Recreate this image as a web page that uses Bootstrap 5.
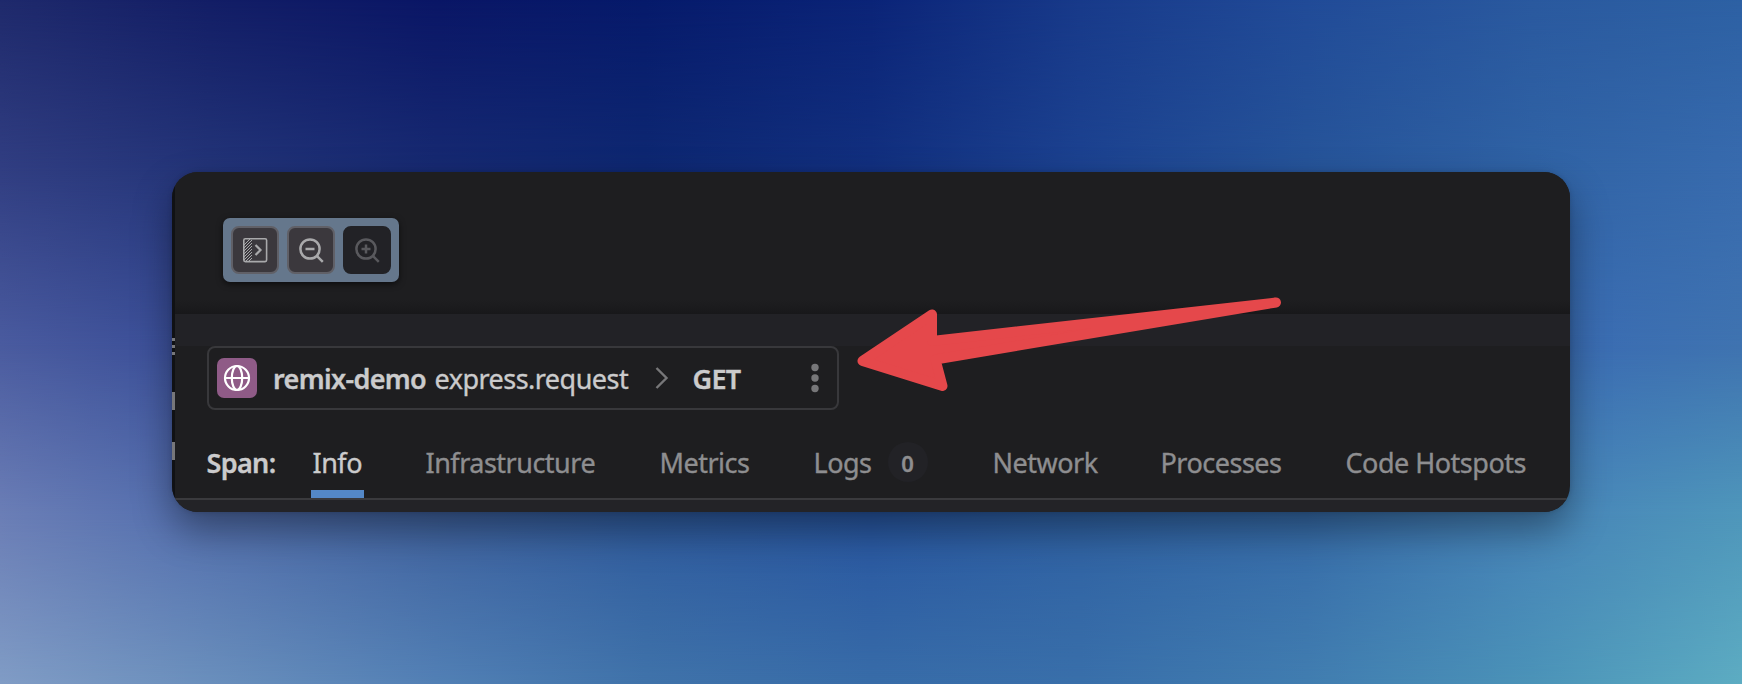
<!DOCTYPE html>
<html lang="en">
<head>
<meta charset="utf-8">
<meta name="viewport" content="width=device-width, initial-scale=1">
<title>Span details</title>
<link href="https://cdn.jsdelivr.net/npm/bootstrap@5.3.0/dist/css/bootstrap.min.css" rel="stylesheet">
<style>
  body { font-family: "Noto Sans", sans-serif; color: #cbcbcc; background: #2c5ba0; -webkit-text-stroke: .35px; }
  .stage { height: 684px; padding: 172px; isolation: isolate; }
  /* backdrop: horizontal gradients blended into each other down the page */
  .wash { inset: 0; z-index: -1; }
  .wash i { position: absolute; inset: 0; -webkit-mask-image: linear-gradient(transparent var(--a), #000 var(--b)); mask-image: linear-gradient(transparent var(--a), #000 var(--b)); }
  .w0 { background: linear-gradient(90deg, #1f2a6c 0, #131e66 12%, #0a1666 25%, #061a6b 37%, #0b2478 50%, #183a8a 62%, #214b98 75%, #2a599f 88%, #2d61a4 100%); }
  .w1 { --a: 0px; --b: 170px; background: linear-gradient(90deg, #313e82 0, #233478 12%, #172a72 25%, #0e2872 37%, #12307f 50%, #1c4290 62%, #265499 75%, #3063a5 88%, #386bae 100%); }
  .w2 { --a: 170px; --b: 345px; background: linear-gradient(90deg, #4a5b9f 0, #3b4f98 10%, #27458a 30%, #204688 50%, #2b599f 75%, #3b6db2 92%, #3f73b0 100%); }
  .w3 { --a: 345px; --b: 515px; background: linear-gradient(90deg, #6b7eb6 0, #5671af 10%, #3f629e 25%, #2f5b9d 37%, #2856a0 50%, #2f61a2 62%, #366ba8 75%, #4784b8 88%, #4f97bb 100%); }
  .w4 { --a: 515px; --b: 684px; background: linear-gradient(90deg, #809cc5 0, #6a8fbc 12%, #5280b5 25%, #4073aa 37%, #386ca8 50%, #396faa 62%, #417db0 75%, #4b93b8 88%, #5dacc2 100%); }

  .panel { height: 340px; border-radius: 26px; background: #1e1e20; box-shadow: 0 18px 38px rgba(0,0,0,.38), 0 0 5px rgba(0,0,0,.15); }
  .sliver { width: 3px; background: #101114; padding-top: 166px; gap: 4px; }
  .sliver b { display: block; height: 3px; background: #77777a; flex: none; }
  .sliver .tall { height: 18px; }
  .canvas-area { height: 142px; padding: 46px 48px 0; background: linear-gradient(#1e1e20 128px, #18181a 142px); }
  .tools { width: 176px; height: 64px; padding: 8px; border-radius: 7px; background: #65778c; box-shadow: 0 2px 6px rgba(0,0,0,.6); }
  .tool { width: 48px; height: 48px; padding: 0; border: 2px solid #606067; border-radius: 8px; background: #3b383d; color: #a9a9ab; line-height: 0; }
  .tool.off { background: #222226; border-color: #222226; color: #59595d; }
  .band { height: 32px; background: #222226; }
  .crumb { width: 632px; height: 64px; margin-left: 32px; padding: 0 8px; border: 2px solid #38383b; border-radius: 8px; background: #1e1e20; font-size: 27px; letter-spacing: -.53px; line-height: 60px; white-space: nowrap; }
  .crumb > .txt { padding-top: 1px; }
  .service { width: 40px; height: 40px; border-radius: 7px; background: #8f5b87; flex: none; }
  .strong { font-weight: 600; letter-spacing: -.65px; }
  .tabs { display: grid; grid-template-columns: 106px 113px 234px 154px 179px 168px 185px 1fr; height: 90px; padding-left: 31.5px; border-bottom: 2px solid #3a3a3d; font-size: 27px; letter-spacing: -.5px; color: #8e8e90; white-space: nowrap; }
  .tabs > * { line-height: 36px; padding-top: 35px; }
  .tabs .info { color: #cbcbcc; }
  .tabs .info span { display: block; width: 53px; height: 53px; margin-left: -2px; padding-left: 2px; border-bottom: 8px solid #5488c7; }
  .count { display: inline-block; width: 40px; height: 40px; margin: -3px 0 -1px 16px; border-radius: 50%; background: #222226; font-size: 22px; letter-spacing: 0; line-height: 42px; font-weight: 600; text-align: center; vertical-align: top; }
  .arrow { left: 850px; top: 290px; }
</style>
</head>
<body>
<main class="stage position-relative overflow-hidden">
  <div class="wash position-absolute" aria-hidden="true"><i class="w0"></i><i class="w1"></i><i class="w2"></i><i class="w3"></i><i class="w4"></i></div>
  <section class="panel d-flex overflow-hidden">
    <div class="sliver d-flex flex-column"><b></b><b></b><b></b><b class="tall" style="margin-top:33px"></b><b class="tall" style="margin-top:28px"></b></div>
    <div class="flex-grow-1 d-flex flex-column">
      <div class="canvas-area">
        <div class="tools d-flex gap-2">
          <button class="tool btn" aria-label="Collapse"><svg width="26" height="26" viewBox="0 0 26 26" fill="none" stroke="currentColor" stroke-width="1.6"><rect x="1.8" y="1.8" width="22.8" height="22.8" rx="1.5"/><path d="M2 8l6-6M2 11l8-8M2 14l8-8M2 17l8-8M2 20l8-8M2 23l8-8M4 24l6-6M7 24l3-3" stroke-width="1"/><path d="M13.5 8l5 5-5 5" stroke-width="2.2"/></svg></button>
          <button class="tool btn" aria-label="Zoom out"><svg width="28" height="28" viewBox="0 0 28 28" fill="none" stroke="currentColor" stroke-width="2.5"><circle cx="13" cy="13" r="9.6"/><path d="M8.500 13h9M19.800 19.800l6 6"/></svg></button>
          <button class="tool btn off" aria-label="Zoom in"><svg width="28" height="28" viewBox="0 0 28 28" fill="none" stroke="currentColor" stroke-width="2.5"><circle cx="13" cy="13" r="9.6"/><path d="M8.500 13h9M13 8.500v9M19.800 19.800l6 6"/></svg></button>
        </div>
      </div>
      <div class="band"></div>
      <div class="crumb d-flex align-items-center">
        <span class="service d-flex align-items-center justify-content-center"><svg width="28" height="28" viewBox="0 0 28 28" fill="none" stroke="#fff" stroke-width="2.2"><circle cx="14" cy="14" r="12"/><ellipse cx="14" cy="14" rx="5.2" ry="12"/><path d="M2 14h24"/></svg></span>
        <span class="txt strong" style="margin-left:16px;width:161.5px">remix-demo</span>
        <span class="txt" style="width:220px">express.request</span>
        <svg width="14" height="24" viewBox="0 0 14 24" fill="none" stroke="#777779" stroke-width="2.4"><path d="M1.500 2l10 10-10 10"/></svg>
        <span class="txt strong" style="margin-left:24px">GET</span>
        <svg class="ms-auto" width="20" height="30" viewBox="0 0 20 30" fill="#777779"><circle cx="6" cy="4.500" r="3.700"/><circle cx="6" cy="15" r="3.700"/><circle cx="6" cy="25.500" r="3.700"/></svg>
      </div>
      <nav class="tabs">
        <div class="strong" style="color:#cbcbcc">Span:</div>
        <div class="info"><span>Info</span></div>
        <div>Infrastructure</div>
        <div>Metrics</div>
        <div>Logs<span class="count">0</span></div>
        <div>Network</div>
        <div>Processes</div>
        <div>Code Hotspots</div>
      </nav>
      <div class="flex-grow-1" style="background:#232327"></div>
    </div>
  </section>
  <svg class="arrow position-absolute" width="440" height="110" viewBox="850 290 440 110" fill="#e5484b" stroke="#e5484b" stroke-width="10" stroke-linejoin="round"><path d="M862.500 361L932 314.500V341L1276 302.500L935.500 359.500L942.500 386Z"/></svg>
</main>
<script src="https://cdn.jsdelivr.net/npm/bootstrap@5.3.0/dist/js/bootstrap.bundle.min.js"></script>
</body>
</html>
